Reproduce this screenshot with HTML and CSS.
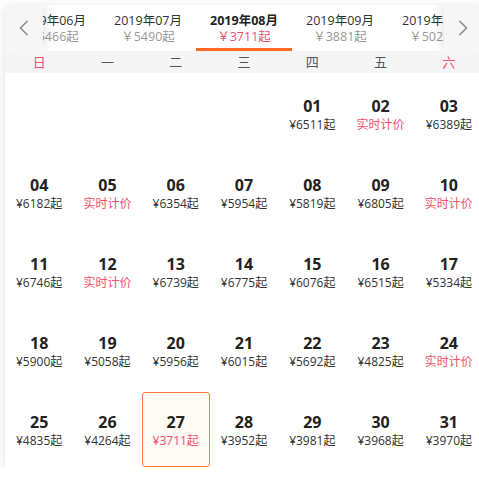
FILE: index.html
```html
<!DOCTYPE html>
<html lang="zh-CN">
<head>
<meta charset="utf-8">
<title>日历</title>
<link rel="stylesheet" href="styles.css">
</head>
<body>
<div class="cal">
  <div class="months">
    <div class="track">
      <div class="tab"><div class="t">2019年06月</div><div class="p">￥5466起</div></div>
      <div class="tab"><div class="t">2019年07月</div><div class="p">￥5490起</div></div>
      <div class="tab active"><div class="t">2019年08月</div><div class="p">￥3711起</div></div>
      <div class="tab"><div class="t">2019年09月</div><div class="p">￥3881起</div></div>
      <div class="tab"><div class="t">2019年10月</div><div class="p">￥5022起</div></div>
    </div>
    <button class="nav prev" aria-label="上个月"><svg width="10" height="16" viewBox="0 0 10 16"><path d="M8.5 1 L1.5 8 L8.5 15" fill="none" stroke="#8c8c8c" stroke-width="1.6"/></svg></button>
    <button class="nav next" aria-label="下个月"><svg width="10" height="16" viewBox="0 0 10 16"><path d="M1.5 1 L8.5 8 L1.5 15" fill="none" stroke="#8c8c8c" stroke-width="1.6"/></svg></button>
  </div>
  <div class="week">
    <span class="we">日</span><span>一</span><span>二</span><span>三</span><span>四</span><span>五</span><span class="we">六</span>
  </div>
  <div class="days">
    <div class="cell empty"></div><div class="cell empty"></div><div class="cell empty"></div><div class="cell empty"></div>
    <div class="cell"><div class="d">01</div><div class="pr">¥6511起</div></div>
    <div class="cell"><div class="d">02</div><div class="pr rt">实时计价</div></div>
    <div class="cell"><div class="d">03</div><div class="pr">¥6389起</div></div>
    <div class="cell"><div class="d">04</div><div class="pr">¥6182起</div></div>
    <div class="cell"><div class="d">05</div><div class="pr rt">实时计价</div></div>
    <div class="cell"><div class="d">06</div><div class="pr">¥6354起</div></div>
    <div class="cell"><div class="d">07</div><div class="pr">¥5954起</div></div>
    <div class="cell"><div class="d">08</div><div class="pr">¥5819起</div></div>
    <div class="cell"><div class="d">09</div><div class="pr">¥6805起</div></div>
    <div class="cell"><div class="d">10</div><div class="pr rt">实时计价</div></div>
    <div class="cell"><div class="d">11</div><div class="pr">¥6746起</div></div>
    <div class="cell"><div class="d">12</div><div class="pr rt">实时计价</div></div>
    <div class="cell"><div class="d">13</div><div class="pr">¥6739起</div></div>
    <div class="cell"><div class="d">14</div><div class="pr">¥6775起</div></div>
    <div class="cell"><div class="d">15</div><div class="pr">¥6076起</div></div>
    <div class="cell"><div class="d">16</div><div class="pr">¥6515起</div></div>
    <div class="cell"><div class="d">17</div><div class="pr">¥5334起</div></div>
    <div class="cell"><div class="d">18</div><div class="pr">¥5900起</div></div>
    <div class="cell"><div class="d">19</div><div class="pr">¥5058起</div></div>
    <div class="cell"><div class="d">20</div><div class="pr">¥5956起</div></div>
    <div class="cell"><div class="d">21</div><div class="pr">¥6015起</div></div>
    <div class="cell"><div class="d">22</div><div class="pr">¥5692起</div></div>
    <div class="cell"><div class="d">23</div><div class="pr">¥4825起</div></div>
    <div class="cell"><div class="d">24</div><div class="pr rt">实时计价</div></div>
    <div class="cell"><div class="d">25</div><div class="pr">¥4835起</div></div>
    <div class="cell"><div class="d">26</div><div class="pr">¥4264起</div></div>
    <div class="cell sel"><div class="d">27</div><div class="pr">¥3711起</div></div>
    <div class="cell"><div class="d">28</div><div class="pr">¥3952起</div></div>
    <div class="cell"><div class="d">29</div><div class="pr">¥3981起</div></div>
    <div class="cell"><div class="d">30</div><div class="pr">¥3968起</div></div>
    <div class="cell"><div class="d">31</div><div class="pr">¥3970起</div></div>
  </div>
</div>
</body>
</html>
```
FILE: styles.css
```css
html, body {
  margin: 0;
  padding: 0;
  overflow: hidden;
  background: #fff;
}
body {
  font-family: "Open Sans", "Noto Sans CJK SC", sans-serif;
  color: #333;
}
.cal {
  margin: 5px 0 0 5px;
  width: 478px;
  background: #fff;
  box-shadow: 0 2px 10px rgba(0, 0, 0, 0.12);
}
.months {
  position: relative;
  height: 46px;
  overflow: hidden;
}
.track {
  display: flex;
  margin-left: -1px;
}
.tab {
  flex: 0 0 96px;
  height: 46px;
  box-sizing: border-box;
  padding-top: 8px;
  text-align: center;
  border-bottom: 3px solid transparent;
}
.tab .t {
  font-size: 12.5px;
  line-height: 16px;
  height: 16px;
  overflow: hidden;
  color: #333;
}
.tab .p {
  font-size: 12.5px;
  line-height: 16px;
  height: 16px;
  overflow: hidden;
  color: #999;
}
.tab.active {
  border-bottom-color: #ff6a22;
}
.tab.active .t {
  font-weight: bold;
  color: #222;
}
.tab.active .p {
  color: #f5506b;
}
.nav {
  position: absolute;
  top: 0;
  width: 38px;
  height: 45px;
  border: 0;
  padding: 0;
  background: #f6f6f6;
  display: flex;
  align-items: center;
  justify-content: center;
}
.nav.prev {
  left: 0;
  box-shadow: 4px 0 8px rgba(0, 0, 0, 0.08);
}
.nav.next {
  left: 439px;
  box-shadow: -4px 0 8px rgba(0, 0, 0, 0.08);
}
.week {
  display: grid;
  grid-template-columns: repeat(7, 1fr);
  background: #f5f5f5;
  height: 22px;
  font-size: 13px;
  line-height: 22px;
  text-align: center;
  color: #555;
}
.week .we {
  color: #f5506b;
}
.days {
  display: grid;
  grid-template-columns: repeat(7, 1fr);
  grid-auto-rows: 75px;
  row-gap: 4px;
  padding: 3px 0 1px;
}
.cell {
  box-sizing: border-box;
  padding-top: 19px;
  text-align: center;
  border: 1px solid transparent;
  border-radius: 3px;
}
.cell .d {
  font-size: 16px;
  font-weight: bold;
  line-height: 20px;
  color: #222;
}
.cell .pr {
  font-size: 12px;
  line-height: 18px;
  color: #333;
}
.cell .pr.rt {
  color: #f5506b;
}
.cell.sel {
  border-color: #ff7a45;
  background: #fffaf3;
}
.cell.sel .pr {
  color: #f5506b;
}
```
